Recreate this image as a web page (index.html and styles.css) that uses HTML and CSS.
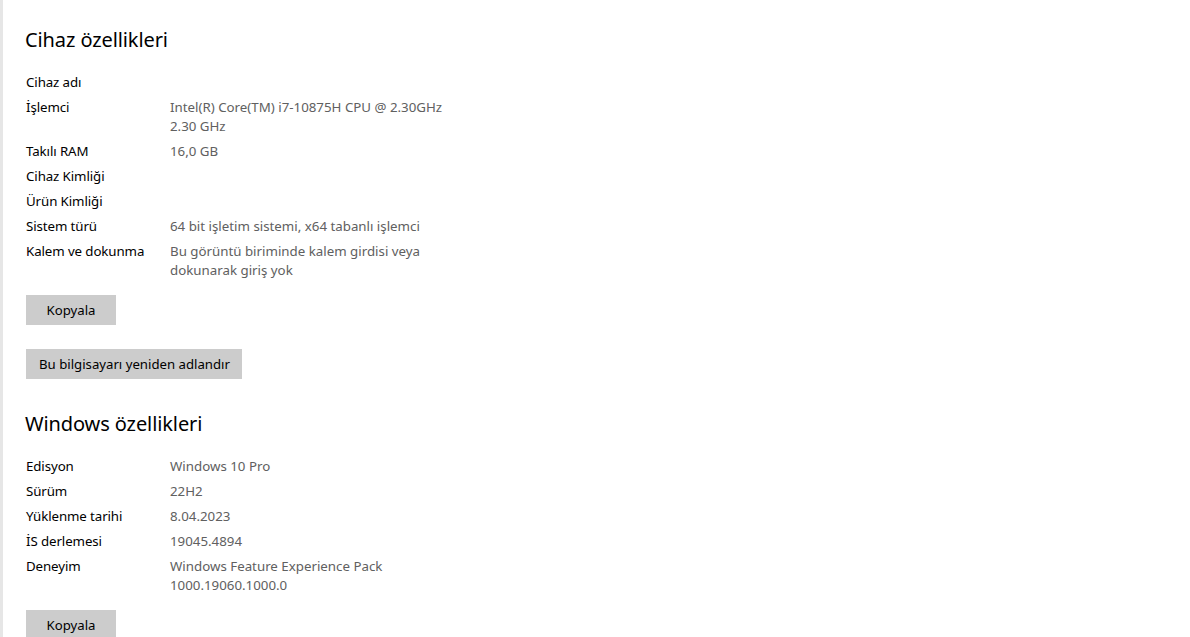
FILE: index.html
```html
<!DOCTYPE html>
<html lang="tr">
<head>
<meta charset="utf-8">
<link rel="stylesheet" href="styles.css">
</head>
<body>
<main class="page">
  <section class="section">
    <h2 class="heading">Cihaz özellikleri</h2>
    <dl class="props">
      <div class="row"><dt>Cihaz adı</dt><dd></dd></div>
      <div class="row"><dt>İşlemci</dt><dd>Intel(R) Core(TM) i7-10875H CPU @ 2.30GHz<br>2.30 GHz</dd></div>
      <div class="row"><dt>Takılı RAM</dt><dd>16,0 GB</dd></div>
      <div class="row"><dt>Cihaz Kimliği</dt><dd></dd></div>
      <div class="row"><dt>Ürün Kimliği</dt><dd></dd></div>
      <div class="row"><dt>Sistem türü</dt><dd>64 bit işletim sistemi, x64 tabanlı işlemci</dd></div>
      <div class="row"><dt>Kalem ve dokunma</dt><dd>Bu görüntü biriminde kalem girdisi veya<br>dokunarak giriş yok</dd></div>
    </dl>
    <button class="btn btn-copy">Kopyala</button>
    <button class="btn btn-rename">Bu bilgisayarı yeniden adlandır</button>
  </section>
  <section class="section">
    <h2 class="heading">Windows özellikleri</h2>
    <dl class="props">
      <div class="row"><dt>Edisyon</dt><dd>Windows 10 Pro</dd></div>
      <div class="row"><dt>Sürüm</dt><dd>22H2</dd></div>
      <div class="row"><dt>Yüklenme tarihi</dt><dd>8.04.2023</dd></div>
      <div class="row"><dt>İS derlemesi</dt><dd>19045.4894</dd></div>
      <div class="row"><dt>Deneyim</dt><dd>Windows Feature Experience Pack<br>1000.19060.1000.0</dd></div>
    </dl>
    <button class="btn btn-copy">Kopyala</button>
  </section>
</main>
</body>
</html>
```
FILE: styles.css
```css
html, body {
  margin: 0;
  padding: 0;
  background: #ffffff;
  height: 100%;
  overflow: hidden;
}
body {
  font-family: "Noto Sans", "Open Sans", sans-serif;
  color: #000;
}
.page {
  border-left: 3px solid #e6e6e6;
  min-height: 100%;
  padding: 26px 0 0 23px;
  box-sizing: border-box;
}
.section {
  display: flex;
  flex-direction: column;
  align-items: flex-start;
}
.section + .section {
  margin-top: 31px;
}
.heading {
  margin: 0;
  font-weight: 400;
  font-size: 20px;
  line-height: 28px;
  letter-spacing: -0.1px;
  margin-left: -1px;
}
.props {
  margin: 19px 0 0 0;
  display: flex;
  flex-direction: column;
  gap: 6px;
}
.row {
  display: grid;
  grid-template-columns: 144px auto;
}
.row dt, .row dd {
  margin: 0;
  font-size: 13.3px;
  line-height: 19px;
}
.row dt {
  letter-spacing: -0.1px;
}
.row dd {
  color: #606060;
}
.btn {
  font-family: inherit;
  font-size: 13.2px;
  color: #000;
  background: #cccccc;
  border: none;
  border-radius: 0;
  height: 30px;
  padding: 0 14px;
  margin: 0;
}
.btn-copy {
  margin-top: 15px;
  width: 90px;
}
.btn-rename {
  margin-top: 24px;
  padding: 0 12px 0 13px;
}
```
